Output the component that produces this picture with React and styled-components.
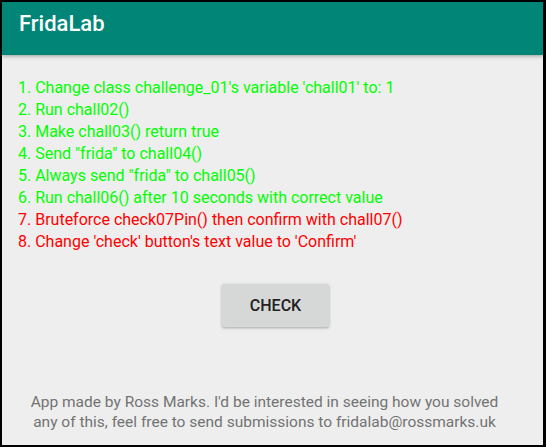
import React from 'react';
import styled, { createGlobalStyle } from 'styled-components';

const Global = createGlobalStyle`
  html, body {
    margin: 0;
    padding: 0;
    background: #000;
  }
`;

const Frame = styled.div`
  box-sizing: border-box;
  width: 546px;
  height: 447px;
  padding: 2px 3px 2px 2px;
  background: #000;
  font-family: Roboto, "Noto Sans", sans-serif;
`;

const Screen = styled.div`
  display: flex;
  flex-direction: column;
  height: 100%;
  background: #eeeeee;
  overflow: hidden;
`;

const Toolbar = styled.div`
  position: relative;
  display: flex;
  align-items: center;
  height: 53px;
  padding: 0 17px 10px;
  box-sizing: border-box;
  background: #008577;
  box-shadow: 0 1px 4px rgba(0, 0, 0, 0.35);
  z-index: 1;
`;

const Title = styled.h1`
  margin: 0;
  font-size: 22px;
  font-weight: 500;
  color: #fff;
`;

const Content = styled.div`
  flex: 1;
  display: flex;
  flex-direction: column;
  padding: 22px 16px 0;
`;

const List = styled.div`
  display: flex;
  flex-direction: column;
`;

const Item = styled.div`
  font-size: 16px;
  line-height: 22px;
  white-space: nowrap;
  color: ${(p) => (p.done ? '#00ff00' : '#ff0000')};
`;

const ButtonRow = styled.div`
  display: flex;
  justify-content: center;
  margin-top: 31px;
  padding-left: 6px;
`;

const Button = styled.button`
  width: 107px;
  height: 43px;
  border: none;
  border-radius: 2px;
  background: #d6d7d7;
  box-shadow: 0 1px 3px rgba(0, 0, 0, 0.3);
  font-family: Roboto, "Noto Sans", sans-serif;
  font-size: 16px;
  font-weight: 500;
  color: #222;
`;

const Footer = styled.p`
  margin: auto 0 13px;
  padding-right: 16px;
  text-align: center;
  font-size: 15.5px;
  line-height: 20px;
  white-space: nowrap;
  color: #737373;
`;

const challenges = [
  { text: "1. Change class challenge_01's variable 'chall01' to: 1", done: true },
  { text: '2. Run chall02()', done: true },
  { text: '3. Make chall03() return true', done: true },
  { text: '4. Send "frida" to chall04()', done: true },
  { text: '5. Always send "frida" to chall05()', done: true },
  { text: '6. Run chall06() after 10 seconds with correct value', done: true },
  { text: '7. Bruteforce check07Pin() then confirm with chall07()', done: false },
  { text: "8. Change 'check' button's text value to 'Confirm'", done: false },
];

export default function App() {
  return (
    <Frame>
      <Global />
      <Screen>
        <Toolbar>
          <Title>FridaLab</Title>
        </Toolbar>
        <Content>
          <List>
            {challenges.map((c) => (
              <Item key={c.text} done={c.done}>{c.text}</Item>
            ))}
          </List>
          <ButtonRow>
            <Button>CHECK</Button>
          </ButtonRow>
          <Footer>
            App made by Ross Marks. I'd be interested in seeing how you solved
            <br />
            any of this, feel free to send submissions to fridalab@rossmarks.uk
          </Footer>
        </Content>
      </Screen>
    </Frame>
  );
}
